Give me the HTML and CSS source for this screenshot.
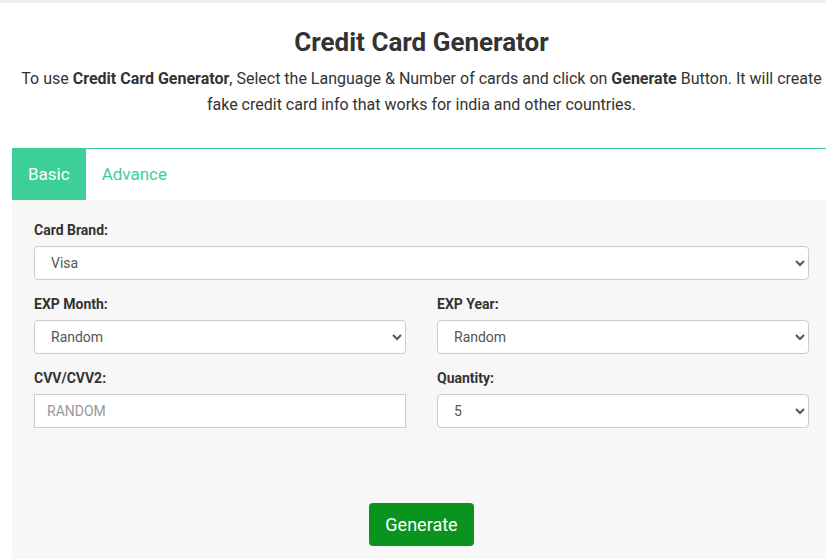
FILE: index.html
```html
<!DOCTYPE html>
<html>
<head>
<meta charset="utf-8">
<link rel="stylesheet" href="styles.css">
</head>
<body>
<div class="topbar"></div>
<div class="container">
  <h1 class="title">Credit Card Generator</h1>
  <p class="intro">To use <b>Credit Card Generator</b>, Select the Language &amp; Number of cards and click on <b>Generate</b> Button. It will create fake credit card info that works for india and other countries.</p>
  <div class="tabs">
    <div class="tab active">Basic</div>
    <div class="tab">Advance</div>
  </div>
  <div class="panel">
    <div class="group">
      <label class="label">Card Brand:</label>
      <select class="control"><option>Visa</option></select>
    </div>
    <div class="row">
      <div class="group">
        <label class="label">EXP Month:</label>
        <select class="control"><option>Random</option></select>
      </div>
      <div class="group">
        <label class="label">EXP Year:</label>
        <select class="control"><option>Random</option></select>
      </div>
    </div>
    <div class="row">
      <div class="group">
        <label class="label">CVV/CVV2:</label>
        <input class="control input" type="text" placeholder="RANDOM">
      </div>
      <div class="group">
        <label class="label">Quantity:</label>
        <select class="control"><option>5</option></select>
      </div>
    </div>
    <div class="actions">
      <button class="btn">Generate</button>
    </div>
  </div>
</div>
</body>
</html>
```
FILE: styles.css
```css
html { overflow: hidden; }
body {
  margin: 0;
  font-family: Roboto, "Liberation Sans", Arial, sans-serif;
  color: #333;
  background: #fff;
}
.topbar {
  height: 3px;
  background: #eef0f0;
}
.container {
  width: 819px;
  margin-left: 12px;
}
.title {
  margin: 25px 0 10px;
  font-size: 26px;
  line-height: 28px;
  font-weight: 700;
  text-align: center;
  color: #333;
}
.intro {
  margin: 0 0 30px;
  font-size: 16px;
  line-height: 26px;
  text-align: center;
  color: #333;
}
.intro b { font-weight: 700; }
.tabs {
  display: flex;
  border-top: 1px solid #3ccf97;
  height: 51px;
}
.tab {
  padding: 0 16px 1px;
  display: flex;
  align-items: center;
  font-size: 17px;
  color: #3ccf97;
}
.tab.active {
  background: #3ccf97;
  color: #fff;
}
.panel {
  background: #f7f7f7;
  padding: 20px 22px 20px;
  height: 400px;
}
.row {
  display: grid;
  grid-template-columns: 1fr 1fr;
  column-gap: 31px;
}
.group {
  display: flex;
  flex-direction: column;
  margin-bottom: 14px;
}
.label {
  font-size: 14px;
  line-height: 20px;
  font-weight: 700;
  color: #333;
  margin-bottom: 6px;
}
.control {
  height: 34px;
  box-sizing: border-box;
  border: 1px solid #ccc;
  border-radius: 4px;
  background: #fff;
  font-family: Roboto, "Liberation Sans", Arial, sans-serif;
  font-size: 14px;
  color: #555;
  padding: 6px 12px;
  width: 100%;
}
.input {
  border-radius: 0;
}
.input::placeholder { color: #999; }
.actions {
  display: flex;
  justify-content: center;
  margin-top: 61px;
}
.btn {
  background: #0b9320;
  color: #fff;
  border: none;
  border-radius: 4px;
  font-family: Roboto, "Liberation Sans", Arial, sans-serif;
  font-size: 18px;
  padding: 0 16px;
  height: 43px;
  width: 105px;
}
```
